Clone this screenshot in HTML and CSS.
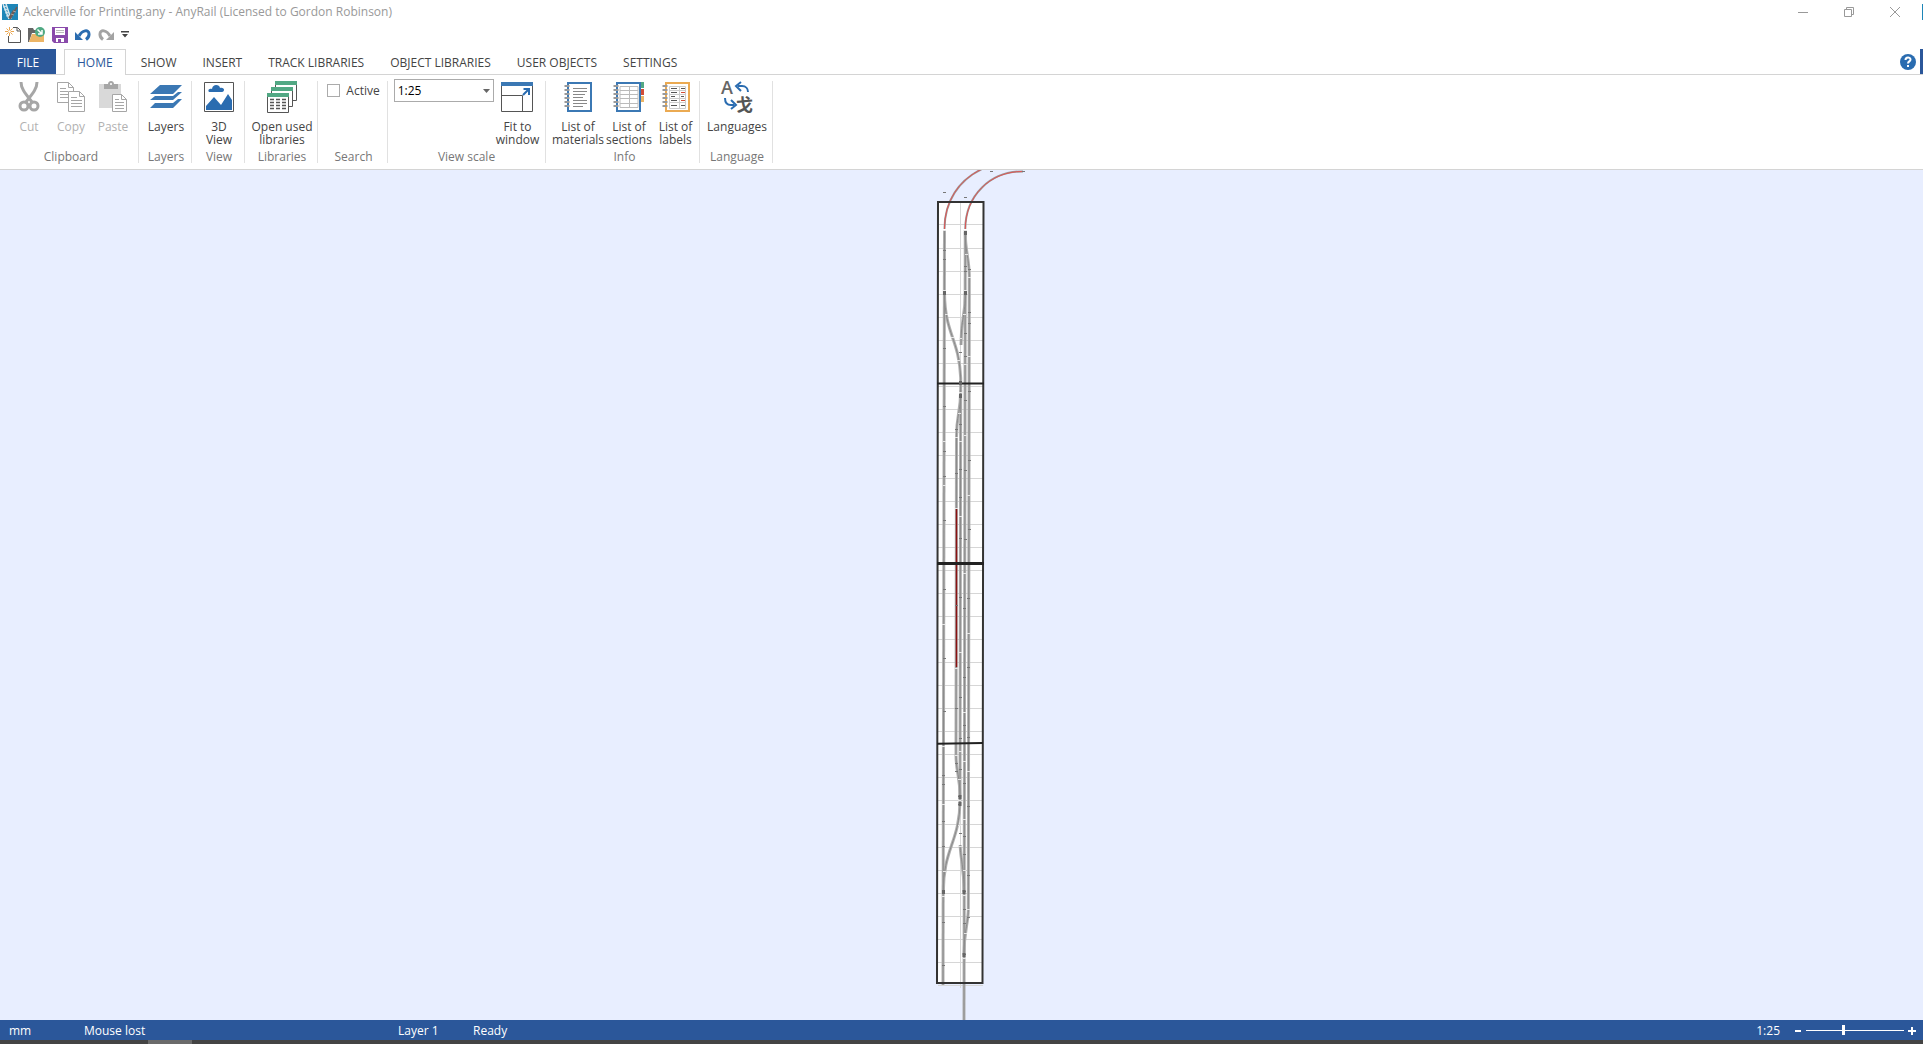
FILE: index.html
```html
<!DOCTYPE html>
<html lang="en">
<head>
  <meta charset="UTF-8">
  <meta name="viewport" content="width=device-width, initial-scale=1.0">
  <title>Ackerville for Printing.any - AnyRail</title>
  <link rel="stylesheet" href="styles.css">
</head>
<body>

  <header class="title-bar">
    <svg class="app-icon" width="16" height="16" viewBox="0 0 16 16">
      <rect width="16" height="16" fill="#1e86b8"/>
      <path d="M1 0L7 15M4 0L9 15" stroke="#d5e6ee" stroke-width="1.5"/>
      <path d="M1 3l4-1M2 6l4-1M3 9l4-1M4 12l4-1" stroke="#d5e6ee"/>
      <path d="M15 3L8 15M12 6L7 14" stroke="#6d5c58" stroke-width="1.5"/>
      <path d="M11 7l3 1M9 10l3 1" stroke="#a9a3a0"/>
    </svg>
    <h1 class="title">Ackerville for Printing.any - AnyRail (Licensed to Gordon Robinson)</h1>
    <div class="window-buttons">
      <button aria-label="Minimize"><svg width="10" height="10" viewBox="0 0 10 10"><path d="M0 5.5h10" stroke="#999"/></svg></button>
      <button aria-label="Restore"><svg width="10" height="10" viewBox="0 0 10 10" fill="none" stroke="#999"><path d="M.5 2.5h7v7h-7zM2.5 2V.5h7v7H8"/></svg></button>
      <button aria-label="Close"><svg width="10" height="10" viewBox="0 0 10 10"><path d="M0 0l10 10M10 0L0 10" stroke="#999"/></svg></button>
    </div>
    <span class="edge-icon"></span>
  </header>

  <div class="quick-access">
    <button aria-label="New">
      <svg width="16" height="16" viewBox="0 0 16 16" fill="none">
        <path d="M8 .5h4.500l3 3v12h-12V9M12 .5V4h3.500" stroke="#555"/>
        <path d="M4.500 0v9M0 4.500h9M1.500 1.500l6 6M7.500 1.500l-6 6" stroke="#e9a651"/>
        <circle cx="4.500" cy="4.500" r="1.300" fill="#fff"/>
      </svg>
    </button>
    <button aria-label="Open">
      <svg width="17" height="16" viewBox="0 0 17 16">
        <path d="M0 1h5l1 2h3v3H4l-3 9H0z" fill="#666"/>
        <path d="M4 7h12v8H1z" fill="#ecb566"/>
        <circle cx="12" cy="5" r="5" fill="#4fa983"/>
        <path d="M9.500 2.500l4 4M14 3v4h-4" fill="none" stroke="#fff" stroke-width="1.500"/>
      </svg>
    </button>
    <button aria-label="Save">
      <svg width="16" height="16" viewBox="0 0 16 16">
        <path d="M0 0h16v16H2l-2-2z" fill="#8a4bab"/>
        <path d="M3 1h10v7H3zM4 11h8v4H9v-3H6v3H4z" fill="#fff"/>
        <path d="M4 3.500h8M4 5.500h8" stroke="#bbb"/>
      </svg>
    </button>
    <button aria-label="Undo">
      <svg width="16" height="12" viewBox="0 0 16 12">
        <path d="M4 7C7 1 14 0 14 5c.2 3-1 4-3 5.500" fill="none" stroke="#2a6cb0" stroke-width="3"/>
        <path d="M0 3v8h8z" fill="#2a6cb0"/>
      </svg>
    </button>
    <button aria-label="Redo">
      <svg width="16" height="12" viewBox="0 0 16 12">
        <path d="M12 7C9 1 2 0 2 5c-.2 3 1 4 3 5.500" fill="none" stroke="#a3a3a3" stroke-width="3"/>
        <path d="M16 3v8H8z" fill="#a3a3a3"/>
      </svg>
    </button>
    <button aria-label="Customize toolbar">
      <svg width="8" height="7" viewBox="0 0 8 7"><path d="M0 0h8v1.500H0zM1 3h6L4 6.500z" fill="#444"/></svg>
    </button>
  </div>

  <nav class="tabs">
    <button class="file-tab">FILE</button>
    <button class="tab active">HOME</button>
    <button class="tab">SHOW</button>
    <button class="tab">INSERT</button>
    <button class="tab">TRACK LIBRARIES</button>
    <button class="tab">OBJECT LIBRARIES</button>
    <button class="tab">USER OBJECTS</button>
    <button class="tab">SETTINGS</button>
    <button class="help" aria-label="Help">
      <svg width="16" height="16" viewBox="0 0 16 16">
        <circle cx="8" cy="8" r="8" fill="#2a6cb0"/>
        <path d="M5.500 6c0-3.500 5-3.200 5-.5C10.500 7.500 8 7.300 8 9.500M8 11v2" fill="none" stroke="#fff" stroke-width="2"/>
      </svg>
    </button>
    <span class="edge-tab"></span>
  </nav>

  <div class="ribbon">
    <section class="group clipboard">
      <div class="tools">
        <button class="tool" disabled>
          <svg width="32" height="32" viewBox="0 0 32 32" fill="none">
            <path d="M8 1c0 6 3 10 11 20M24 1c0 6-3 10-11 20" stroke="#a6a6a6" stroke-width="3"/>
            <circle cx="11" cy="25" r="4" stroke="#a6a6a6" stroke-width="3"/>
            <circle cx="21" cy="25" r="4" stroke="#a6a6a6" stroke-width="3"/>
          </svg>
          Cut
        </button>
        <button class="tool" disabled>
          <svg width="32" height="32" viewBox="0 0 32 32" fill="#fff" stroke="#a6a6a6">
            <path d="M2.500 1.500h11l5 5v15h-16zM13.500 1.500v5h5M5 7.500h6M5 10.500h8M5 13.500h8M5 16.500h8"/>
            <path d="M13.500 10.500h11l5 5v15h-16zM24.500 10.500v5h5M16 16.500h6M16 19.500h11M16 22.500h11M16 25.500h11"/>
          </svg>
          Copy
        </button>
        <button class="tool" disabled>
          <svg width="32" height="32" viewBox="0 0 32 32">
            <path d="M2 3h22v24H2z" fill="#d9d9d9"/>
            <path d="M7 3h4c0-4 6-4 6 0h4v5H7z" fill="#a6a6a6"/>
            <circle cx="14" cy="3" r="1" fill="#fff"/>
            <path d="M15.500 13.500h9l5 5v12h-14zM24.500 13.500v5h5M18 18.500h4M18 21.500h9M18 24.500h9M18 27.500h9" fill="#fff" stroke="#a6a6a6"/>
          </svg>
          Paste
        </button>
      </div>
      <h2>Clipboard</h2>
    </section>

    <section class="group layers">
      <div class="tools">
        <button class="tool">
          <svg width="32" height="32" viewBox="0 0 32 32" fill="#3b78b4">
            <path d="M10 4h22l-9 9H0zM5 15h18l5-4h4l-9 8H0zM5 22h18l5-4h4l-9 9H0z"/>
          </svg>
          Layers
        </button>
      </div>
      <h2>Layers</h2>
    </section>

    <section class="group view">
      <div class="tools">
        <button class="tool">
          <svg width="32" height="32" viewBox="0 0 32 32">
            <path d="M1.500 1.500h29v29h-29z" fill="#fff" stroke="#555"/>
            <path d="M3 29v-4l8-9 7 8 7-11 4 6v10z" fill="#2a6cb0"/>
            <path d="M6 11c-2-3 2-4 3-3 1-6 8-4 8-1 5-1 5 4 2 4z" fill="#2a6cb0"/>
          </svg>
          3D<br>View
        </button>
      </div>
      <h2>View</h2>
    </section>

    <section class="group libraries">
      <div class="tools">
        <button class="tool">
          <svg width="32" height="32" viewBox="0 0 32 32">
            <path d="M9.500 1v6M30.500 4v15.500H27M5.500 7v6M26.500 10v15.500H23M1.500 16v15.500h21V16" fill="none" stroke="#555"/>
            <path d="M9 0h22v4H9zM5 6h22v4H5zM1 12h22v4H1z" fill="#52a884"/>
            <path d="M4 18.500h16M4 21.500h16M4 24.500h16M4 27.500h16" stroke="#555" stroke-width="1.500" stroke-dasharray="4 2"/>
          </svg>
          Open used<br>libraries
        </button>
      </div>
      <h2>Libraries</h2>
    </section>

    <section class="group search">
      <div class="tools">
        <label class="check"><input type="checkbox">Active</label>
      </div>
      <h2>Search</h2>
    </section>

    <section class="group scale">
      <div class="tools">
        <div class="select-box">
          <select aria-label="View scale">
            <option>1:25</option>
            <option>1:50</option>
          </select>
          <svg class="arrow" width="7" height="4" viewBox="0 0 7 4"><path d="M0 0h7L3.500 4z" fill="#666"/></svg>
        </div>
        <button class="tool">
          <svg width="32" height="32" viewBox="0 0 32 32">
            <path d="M.5 2.500h31v28H.5zM.5 14.500h21v16" fill="none" stroke="#555"/>
            <path d="M0 1h32v4H0z" fill="#3b78b4"/>
            <path d="M22 14l6-6M22.500 8H28v6" fill="none" stroke="#2a6cb0" stroke-width="2"/>
          </svg>
          Fit to<br>window
        </button>
      </div>
      <h2>View scale</h2>
    </section>

    <section class="group info">
      <div class="tools">
        <button class="tool materials">
          <svg width="32" height="32" viewBox="0 0 32 32">
            <path d="M6 2h23v28H6z" fill="#fff" stroke="#3b78b4" stroke-width="2"/>
            <path d="M11 7.500h14M11 10.500h14M11 13.500h12M11 16.500h10M11 19.500h14M11 22.500h14M11 25.500h10" stroke="#888"/>
            <path d="M5 4v24" stroke="#999" stroke-width="5" stroke-dasharray="2 2"/>
          </svg>
          List of<br>materials
        </button>
        <button class="tool sections">
          <svg width="32" height="32" viewBox="0 0 32 32">
            <path d="M4 2h23v28H4z" fill="#fff" stroke="#3b78b4" stroke-width="2"/>
            <path d="M7 5.500h18v21H7zM7 9.500h18M7 13.500h18M7 17.500h18M7 22.500h18M16.500 5v21" fill="none" stroke="#bbb"/>
            <path d="M3 4v24" stroke="#999" stroke-width="5" stroke-dasharray="2 2"/>
            <path d="M28 1h3v6h-3z" fill="#52a884"/>
            <path d="M28 8h3v6h-3z" fill="#d24c36"/>
            <path d="M28 15h3v6h-3z" fill="#ecb566"/>
          </svg>
          List of<br>sections
        </button>
        <button class="tool">
          <svg width="32" height="32" viewBox="0 0 32 32">
            <path d="M6 2h23v28H6z" fill="#fff" stroke="#ebaa52" stroke-width="2"/>
            <path d="M9.500 5.500h16v22h-16zM9 9.500h17M9 13.500h17M9 17.500h17M9 21.500h17M19.500 5v22" fill="none" stroke="#ccc"/>
            <path d="M11 7.500h6M21 7.500h4M11 11.500h6M11 15.500h4M21 15.500h3M11 19.500h6M11 24.500h6M21 24.500h4" stroke="#555"/>
            <path d="M21 11.500h4M21 19.500h4" stroke="#d24c36"/>
            <path d="M5 4v24" stroke="#999" stroke-width="5" stroke-dasharray="2 2"/>
          </svg>
          List of<br>labels
        </button>
      </div>
      <h2>Info</h2>
    </section>

    <section class="group language">
      <div class="tools">
        <button class="tool">
          <svg class="languages-icon" width="32" height="32" viewBox="0 0 32 32" fill="none">
            <text class="letter" x="0" y="13">A</text>
            <text class="glyph" x="15" y="30">戈</text>
            <path d="M17 5h4c4 0 6 3 6 6M20 1l-5 4 5 5M4 17c0 5 2 7 6 7h3M10 19l5 5-5 4" stroke="#2a6cb0" stroke-width="2"/>
          </svg>
          Languages
        </button>
      </div>
      <h2>Language</h2>
    </section>
  </div>

  <main class="workspace">
    <svg class="layout" width="161" height="850" viewBox="881 170 161 850" fill="none">
      <defs>
        <g id="tracks">
          <path d="M944.500 230L943 985"/>
          <path d="M965.300 230L964 1020"/>
          <path d="M965.300 232C965 250 969 258 969.300 275L968.300 910C968 925 964 930 964 955"/>
          <path d="M944.500 293C945 335 959 338 960.700 378L960 800C960 842 943 848 943.300 893"/>
          <path d="M965.300 293C965.500 315 961 318 961 345M960.200 845C960.500 860 964 866 964 892"/>
          <path d="M960.700 390C960.500 414 956.500 414 956.500 437L956 755C956 772 960 776 960 797"/>
        </g>
      </defs>
      <!-- baseboard and grid -->
      <path d="M938 202H983.500L982.500 983H937z" fill="#fff"/>
      <path class="grid" d="M960.500 202V988M938 224.500h45M938 248.500h45M938 271.500h45M938 294.500h45M938 317.500h45M938 340.500h45M938 363.500h45M938 386.500h45M938 409.500h45M938 432.500h45M938 455.500h45M938 478.500h45M938 501.500h45M938 524.500h45M938 547.500h45M938 570.500h45M938 593.500h45M938 616.500h45M938 639.500h45M938 662.500h45M938 685.500h45M938 708.500h45M938 731.500h45M938 754.500h45M938 777.500h45M938 800.500h45M938 824.500h45M938 847.500h45M938 870.500h45M938 893.500h45M938 916.500h45M938 939.500h45M938 962.500h45M938 985.500h45"/>
      <!-- tracks -->
      <use href="#tracks" class="rails"/>
      <use href="#tracks" class="center-line"/>
      <path class="curve" d="M944.500 229C944.500 201 959 180 982 169M965.300 229C965.300 196 990 171 1023 171.500"/>
      <path class="curve-line" d="M944.500 229C944.500 201 959 180 982 169M965.300 229C965.300 196 990 171 1023 171.500"/>
      <path d="M956.500 509V667" stroke="#8b1111" stroke-width="1.500"/>
      <!-- board edges -->
      <path d="M938 202H983.500L982.500 983H937z" stroke="#333" stroke-width="2"/>
      <path d="M937 383.500h47M937 743.800l46-.8" stroke="#222" stroke-width="2"/>
      <path d="M937 563.500h47" stroke="#222" stroke-width="3"/>
      <!-- track centres, joints and switch ends -->
      <path class="mark" d="M943 192.500h3M964 197.500h3M990 171.500h3M1022 171.500h3M943 250.500h3M943 259.500h3M943 293.500h3M943 348.500h3M943 406.500h3M943 451.500h3M943 476.500h3M943 520.500h3M943 589.500h3M943 658.500h3M943 711.500h3M942 775.500h3M942 784.500h3M942 821.500h3M942 846.500h3M942 892.500h3M942 922.500h3M942 965.500h3M964 232.500h3M964 266.500h3M964 271.500h3M964 293.500h3M964 333.500h3M964 356.500h3M964 400.500h3M964 470.500h3M964 539.500h3M963 608.500h3M963 677.500h3M963 725.500h3M963 783.500h3M963 836.500h3M963 854.500h3M963 891.500h3M963 909.500h3M963 923.500h3M963 954.500h3M968 269.500h3M968 312.500h3M968 323.500h3M968 391.500h3M968 460.500h3M968 529.500h3M967 598.500h3M967 667.500h3M967 737.500h3M967 806.500h3M967 875.500h3M967 917.500h3M959 352.500h3M959 383.500h3M959 396.500h3M959 424.500h3M959 469.500h3M959 497.500h3M959 538.500h3M959 597.500h3M959 697.500h3M959 738.500h3M959 769.500h3M958 796.500h3M958 804.500h3M959 833.500h3M955 429.500h3M955 473.500h3M955 605.500h3M955 708.500h3M955 763.500h3M955 771.500h3"/>
      <path class="joint" d="M943 230.500h3M943 290.500h3M945 314.500h3M951 337.500h3M957 360.500h3M943 441.500h3M943 485.500h3M942 624.500h3M942 746.500h3M942 804.500h3M943 871.500h3M942 896.500h3M964 230.500h3M965 254.500h3M964 290.500h3M963 314.500h3M964 364.500h3M964 435.500h3M963 573.500h3M963 712.500h3M963 761.500h3M963 819.500h3M963 870.500h3M963 895.500h3M964 933.500h3M963 958.500h3M968 277.500h3M968 356.500h3M967 495.500h3M967 633.500h3M967 771.500h3M967 909.500h3M959 338.500h3M959 392.500h3M958 413.500h3M959 441.500h3M959 516.500h3M959 652.500h3M959 751.500h3M958 779.500h3M958 800.500h3M958 825.500h3M959 846.500h3M955 437.500h3M955 508.500h3M955 668.500h3M955 755.500h3"/>
      <path class="switch" d="M944.500 291v4M965.500 231v4M965.500 291v4M960.500 381v4M960.500 394v4M960 795v4M960 802v4M943.500 890v4M964 890v4M964 953v4"/>
    </svg>
  </main>

  <footer class="status-bar">
    <span class="units">mm</span>
    <span class="mouse">Mouse lost</span>
    <span class="layer">Layer 1</span>
    <span>Ready</span>
    <div class="zoom">
      <span>1:25</span>
      <button aria-label="Zoom out"><svg width="9" height="9" viewBox="0 0 9 9"><path d="M1 5h6" stroke="#fff" stroke-width="2"/></svg></button>
      <input type="range" min="0" max="100" value="38" aria-label="Zoom">
      <button aria-label="Zoom in"><svg width="9" height="9" viewBox="0 0 9 9"><path d="M0 5h8M4 1v8" stroke="#fff" stroke-width="2"/></svg></button>
    </div>
  </footer>
  <div class="taskbar"><span></span></div>

</body>
</html>
```
FILE: styles.css
```css
* {
  margin: 0;
  padding: 0;
  box-sizing: border-box;
}

body {
  height: 100vh;
  display: flex;
  flex-direction: column;
  overflow: hidden;
  background: #fff;
  color: #444;
  font-family: "Open Sans", "Noto Sans", sans-serif;
  font-size: 12px;
  line-height: 13px;
}

button {
  border: none;
  background: none;
  color: inherit;
  font: inherit;
}

svg {
  display: block;
}

.title-bar {
  display: flex;
  align-items: center;
  height: 23px;
  padding-left: 2px;
}

.title {
  margin-left: 5px;
  color: #999;
  font-size: 12px;
  font-weight: normal;
}

.window-buttons {
  display: flex;
  margin-left: auto;
}

.window-buttons button {
  display: flex;
  justify-content: center;
  width: 46px;
}

.edge-icon {
  width: 1px;
  height: 16px;
  margin-left: 4px;
  background: #1e86b8;
}

.quick-access {
  display: flex;
  align-items: center;
  gap: 7px;
  height: 26px;
  padding: 0 5px 3px;
}

.tabs {
  display: flex;
  height: 26px;
  border-bottom: 1px solid #d4d4d4;
}

.file-tab {
  width: 56px;
  height: 25px;
  margin-right: 8px;
  padding-top: 1px;
  background: #2b579a;
  color: #fff;
}

.tab {
  padding: 0 13px;
  height: 26px;
}

.tab.active {
  padding: 0 12px;
  margin-right: 2px;
  border: 1px solid #d4d4d4;
  border-bottom: none;
  background: #fff;
  color: #2b579a;
}

.help {
  margin-left: auto;
}

.edge-tab {
  width: 3px;
  height: 25px;
  margin-left: 4px;
  background: #2b579a;
}

.ribbon {
  display: flex;
  height: 95px;
  padding: 6px 0;
  border-bottom: 1px solid #d4d4d4;
}

.group {
  display: flex;
  flex-direction: column;
  justify-content: space-between;
  align-items: center;
  padding-left: 2px;
  border-right: 1px solid #e1e1e1;
}

.group h2 {
  color: #777;
  font-size: 12px;
  font-weight: normal;
  line-height: 12px;
}

.tools {
  display: flex;
  justify-content: center;
}

.tool {
  display: flex;
  flex-direction: column;
  align-items: center;
  min-width: 42px;
  line-height: 13px;
  text-align: center;
  white-space: nowrap;
}

.tool svg {
  margin-bottom: 7px;
}

.tool:disabled {
  color: #b1b1b1;
}

.clipboard {
  width: 139px;
  padding-left: 4px;
}

.layers,
.view {
  width: 53px;
}

.libraries,
.language {
  width: 73px;
}

.search {
  width: 70px;
}

.scale {
  width: 158px;
  padding-left: 0;
}

.info {
  width: 154px;
  padding-left: 4px;
}

.check {
  display: flex;
  align-items: center;
  gap: 6px;
  margin-top: 3px;
}

.check input {
  appearance: none;
  width: 13px;
  height: 13px;
  border: 1px solid #ababab;
}

.select-box {
  position: relative;
  width: 100px;
  height: 23px;
  margin: -2px 2px 0 0;
}

.select-box select {
  appearance: none;
  width: 100%;
  height: 100%;
  padding: 0 3px;
  border: 1px solid #ababab;
  border-radius: 0;
  background: #fff;
  color: #000;
  font: inherit;
}

.arrow {
  position: absolute;
  top: 10px;
  right: 4px;
  pointer-events: none;
}

.materials,
.sections {
  width: 51px;
}

.languages-icon {
  overflow: visible;
}

.letter {
  fill: #666;
  font: 600 18px "Open Sans", sans-serif;
}

.glyph {
  fill: #555;
  font: bold 17px "Noto Sans CJK SC", sans-serif;
}

.workspace {
  flex: 1;
  min-height: 0;
  display: flex;
  justify-content: center;
  overflow: hidden;
  background: #e8eeff;
}

.layout {
  flex: none;
}

.grid {
  stroke: #d6d6d6;
}

.rails {
  stroke: #b0b0b0;
  stroke-width: 3;
}

.center-line {
  stroke: #8a8a8a;
}

.curve {
  stroke: #999;
  stroke-width: 2;
}

.curve-line {
  stroke: #df5555;
}

.mark {
  stroke: #777;
}

.joint {
  stroke: #e6e6e6;
}

.switch {
  stroke: #666;
  stroke-width: 3;
}

.status-bar {
  display: flex;
  align-items: center;
  height: 20px;
  padding: 0 6px 0 9px;
  background: #2b579a;
  color: #fff;
}

.units {
  width: 75px;
}

.mouse {
  width: 314px;
}

.layer {
  width: 75px;
}

.zoom {
  display: flex;
  align-items: center;
  margin-left: auto;
}

.zoom span {
  margin-right: 14px;
}

.zoom input {
  appearance: none;
  width: 98px;
  height: 11px;
  margin: 0 4px 0 3px;
  background: linear-gradient(#fff, #fff) center / 100% 1px no-repeat;
}

.zoom input::-webkit-slider-thumb {
  appearance: none;
  width: 3px;
  height: 10px;
  background: #fff;
}

.taskbar {
  height: 4px;
  background: #444;
}

.taskbar span {
  display: block;
  width: 44px;
  height: 4px;
  margin-left: 148px;
  background: #6b6b6b;
}
```
